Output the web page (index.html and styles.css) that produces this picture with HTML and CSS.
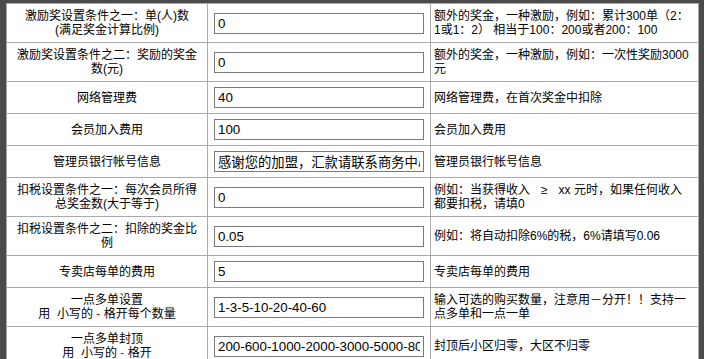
FILE: index.html
```html
<!DOCTYPE html>
<html lang="zh-CN">
<head>
    <meta charset="UTF-8">
    <title>奖金参数设置</title>
    <link rel="stylesheet" href="styles.css">
</head>
<body>
    <table class="settings">
        <colgroup>
            <col class="col-label">
            <col class="col-input">
            <col class="col-desc">
        </colgroup>
        <tr>
            <td class="label">激励奖设置条件之一：单(人)数<br>(满足奖金计算比例)</td>
            <td class="field"><input type="text" value="0"></td>
            <td class="desc">额外的奖金，一种激励，例如：累计300单（2：1或1：2） 相当于100：200或者200：100</td>
        </tr>
        <tr>
            <td class="label">激励奖设置条件之二：奖励的奖金数(元)</td>
            <td class="field"><input type="text" value="0"></td>
            <td class="desc">额外的奖金，一种激励，例如：一次性奖励3000元</td>
        </tr>
        <tr>
            <td class="label">网络管理费</td>
            <td class="field"><input type="text" value="40"></td>
            <td class="desc">网络管理费，在首次奖金中扣除</td>
        </tr>
        <tr>
            <td class="label">会员加入费用</td>
            <td class="field"><input type="text" value="100"></td>
            <td class="desc">会员加入费用</td>
        </tr>
        <tr>
            <td class="label">管理员银行帐号信息</td>
            <td class="field"><input type="text" value="感谢您的加盟，汇款请联系商务中心"></td>
            <td class="desc">管理员银行帐号信息</td>
        </tr>
        <tr>
            <td class="label">扣税设置条件之一：每次会员所得总奖金数(大于等于)</td>
            <td class="field"><input type="text" value="0"></td>
            <td class="desc">例如：当获得收入<span class="wide">≥</span>xx 元时，如果任何收入都要扣税，请填0</td>
        </tr>
        <tr>
            <td class="label">扣税设置条件之二：扣除的奖金比例</td>
            <td class="field"><input type="text" value="0.05"></td>
            <td class="desc">例如：将自动扣除6%的税，6%请填写0.06</td>
        </tr>
        <tr>
            <td class="label">专卖店每单的费用</td>
            <td class="field"><input type="text" value="5"></td>
            <td class="desc">专卖店每单的费用</td>
        </tr>
        <tr>
            <td class="label">一点多单设置<br>用&nbsp; 小写的 <span class="red">-</span> 格开每个数量</td>
            <td class="field"><input type="text" value="1-3-5-10-20-40-60"></td>
            <td class="desc">输入可选的购买数量，注意用－分开！！支持一点多单和一点一单</td>
        </tr>
        <tr>
            <td class="label">一点多单封顶<br>用&nbsp; 小写的 <span class="red">-</span> 格开</td>
            <td class="field"><input type="text" value="200-600-1000-2000-3000-5000-8000"></td>
            <td class="desc">封顶后小区归零，大区不归零</td>
        </tr>
    </table>
</body>
</html>
```

FILE: styles.css
```css
/* page frame */
html, body {
    margin: 0;
    padding: 0;
    overflow: hidden;
    background-color: #4b4b4b; /* dark frame round the table */
}

body {
    padding: 3px 5px 0 6px;
    font-family: "Liberation Sans", "Noto Sans CJK SC", sans-serif;
    font-size: 12px;
    color: #000;
}

/* settings table */
.settings {
    width: 693px;
    table-layout: fixed;
    border-collapse: collapse;
    background-color: #fff;
    border: 1px solid #aaa;
}

.col-label {
    width: 201px;
}

.col-input {
    width: 223px;
}

.settings td {
    border: 1px solid #aaa;
    padding: 5px 3px;
    line-height: 14px;
    vertical-align: middle;
}

.settings td.label {
    text-align: center;
    padding: 5px 8px;
}

.settings td.field {
    padding: 5px 6px;
}

.settings td.desc {
    text-align: left;
    padding: 5px 8px 5px 3px;
}

.settings input {
    display: block;
    box-sizing: border-box;
    width: 100%;
    height: 21px;
    margin: 0;
    padding: 0 3px;
    border: 1px solid #7a7a7a;
    border-radius: 0;
    background: #fff;
    font-family: "Liberation Sans", "Noto Sans CJK SC", sans-serif;
    font-size: 13.33px;
    color: #000;
}

/* full-width comparison sign with its spaces */
.wide {
    padding: 0 11px;
}

.red {
    color: #f00;
}
```
